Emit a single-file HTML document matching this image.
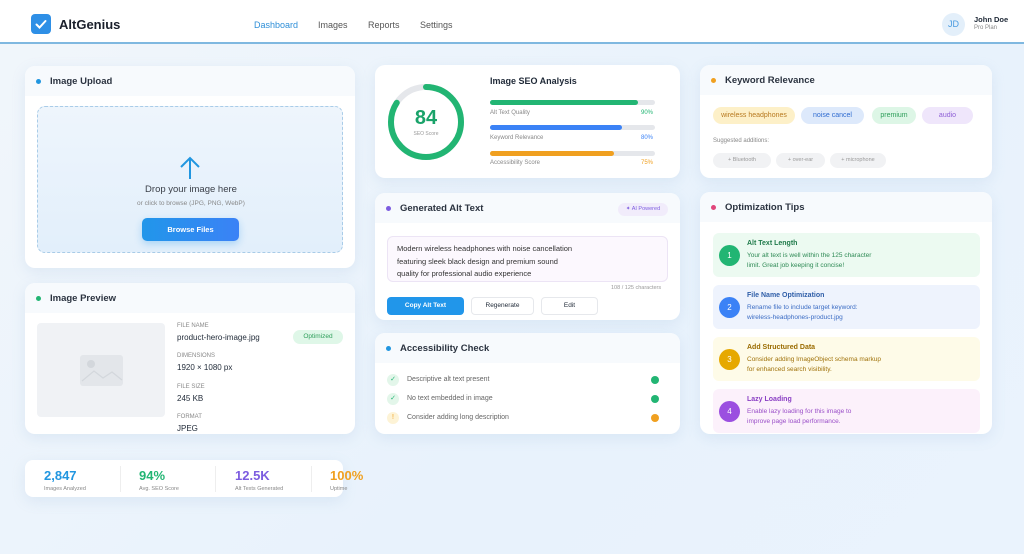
<!DOCTYPE html><html><head><meta charset="utf-8"><style>
*{box-sizing:border-box;margin:0;padding:0}
body{width:1024px;height:554px;overflow:hidden;font-family:"Liberation Sans",sans-serif;background:linear-gradient(135deg,#f1f6fb,#e8f2fc 60%,#eaf3fd);position:relative;color:#1f2937}
.a{position:absolute}
.hdr{left:0;top:0;width:1024px;height:44px;background:#fff;border-bottom:2px solid #7fb8e0}
.card{position:absolute;background:#fff;border-radius:10px;box-shadow:0 4px 14px rgba(120,160,200,.15);overflow:hidden}
.ch{height:30px;background:#f7fafd;font-size:9.5px;font-weight:bold;color:#2b3340;padding:10px 0 0 25px;position:relative}
.ch i{position:absolute;left:11px;top:13px;width:5px;height:5px;border-radius:50%}
.t{position:absolute;white-space:nowrap}
.bar{position:absolute;height:5px;border-radius:3px;background:#e5e7eb}
.bar b{display:block;height:5px;border-radius:3px}
.pill{position:absolute;height:17px;border-radius:9px;font-size:7px;text-align:center;line-height:17px}
.tip{position:absolute;left:13px;width:267px;height:44px;border-radius:6px}
.tip .n{position:absolute;left:6px;top:12px;width:21px;height:21px;border-radius:50%;color:#fff;font-size:8px;text-align:center;line-height:21px}
.tip .h{position:absolute;left:34px;top:7px;font-size:7px;font-weight:bold}
.tip .d{position:absolute;left:34px;top:18px;font-size:6.5px;line-height:10px}
</style></head><body>
<div class="a hdr">
<div class="a" style="left:31px;top:14px;width:20px;height:20px;border-radius:4px;background:#2e8fe6"><svg width="20" height="20"><path d="M5.5 10.5l3 3 6-6.5" stroke="#fff" stroke-width="2" fill="none" stroke-linecap="round"/></svg></div>
<div class="t" style="left:59px;top:17px;font-size:13px;font-weight:bold;color:#1a1f2b">AltGenius</div>
<div class="t" style="left:254px;top:20px;font-size:9px;color:#2f8fd8">Dashboard</div>
<div class="t" style="left:318px;top:20px;font-size:9px;color:#555">Images</div>
<div class="t" style="left:368px;top:20px;font-size:9px;color:#555">Reports</div>
<div class="t" style="left:420px;top:20px;font-size:9px;color:#555">Settings</div>
<div class="a" style="left:942px;top:13px;width:23px;height:23px;border-radius:50%;background:#e3effa;color:#4a9be0;font-size:9px;text-align:center;line-height:23px">JD</div>
<div class="t" style="left:974px;top:15px;font-size:7.5px;font-weight:bold">John Doe</div>
<div class="t" style="left:974px;top:25px;font-size:6px;color:#888">Pro Plan</div>
</div>

<div class="card" style="left:25px;top:66px;width:330px;height:202px">
<div class="ch"><i style="background:#2196e0"></i>Image Upload</div>
<div class="a" style="left:12px;top:40px;width:306px;height:147px;border:1px dashed #a9cce8;border-radius:8px;background:linear-gradient(180deg,#eef5fc,#e2effb)">
<svg class="a" style="left:140px;top:48px" width="24" height="26"><path d="M12 24V3M3 12l9-9 9 9" stroke="#2196e0" stroke-width="2" fill="none"/></svg>
<div class="t" style="left:0;width:306px;text-align:center;top:77px;font-size:9.5px;color:#3a3f48">Drop your image here</div>
<div class="t" style="left:0;width:306px;text-align:center;top:93px;font-size:6.5px;color:#888">or click to browse (JPG, PNG, WebP)</div>
<div class="a" style="left:104px;top:111px;width:97px;height:23px;border-radius:5px;background:linear-gradient(90deg,#2196ea,#3b82f6);color:#fff;font-size:7.5px;font-weight:bold;text-align:center;line-height:23px;box-shadow:0 3px 8px rgba(33,150,234,.3)">Browse Files</div>
</div></div>

<div class="card" style="left:25px;top:283px;width:330px;height:151px">
<div class="ch"><i style="background:#22b573"></i>Image Preview</div>
<div class="a" style="left:12px;top:40px;width:128px;height:94px;background:#f0f2f5;border-radius:4px">
<div class="a" style="left:43px;top:32px;width:43px;height:31px;background:#e3e6ea;border-radius:3px"></div>
<svg class="a" style="left:43px;top:28px" width="44" height="36"><circle cx="11" cy="13" r="4" fill="#d3d7dc"/><path d="M2 30l12-10 9 7 9-6 10 8" stroke="#d3d7dc" stroke-width="1.2" fill="none"/></svg></div>
<div class="t" style="left:152px;top:40px;font-size:6px;color:#888">FILE NAME</div>
<div class="t" style="left:152px;top:50px;font-size:8px">product-hero-image.jpg</div>
<div class="a" style="left:268px;top:47px;width:50px;height:14px;border-radius:7px;background:#dff7e8;color:#2e9e5a;font-size:6.5px;text-align:center;line-height:14px">Optimized</div>
<div class="t" style="left:152px;top:70px;font-size:6px;color:#888">DIMENSIONS</div>
<div class="t" style="left:152px;top:80px;font-size:8px">1920 × 1080 px</div>
<div class="t" style="left:152px;top:101px;font-size:6px;color:#888">FILE SIZE</div>
<div class="t" style="left:152px;top:111px;font-size:8px">245 KB</div>
<div class="t" style="left:152px;top:131px;font-size:6px;color:#888">FORMAT</div>
<div class="t" style="left:152px;top:141px;font-size:8px">JPEG</div>
</div>

<div class="card" style="left:25px;top:460px;width:318px;height:37px;border-radius:8px;overflow:visible">
<div class="t" style="left:19px;top:8px;font-size:13px;font-weight:bold;color:#2196e0">2,847</div>
<div class="t" style="left:19px;top:26px;font-size:5.5px;color:#888">Images Analyzed</div>
<div class="a" style="left:95px;top:6px;width:1px;height:26px;background:#eee"></div>
<div class="t" style="left:114px;top:8px;font-size:13px;font-weight:bold;color:#22b573">94%</div>
<div class="t" style="left:114px;top:26px;font-size:5.5px;color:#888">Avg. SEO Score</div>
<div class="a" style="left:190px;top:6px;width:1px;height:26px;background:#eee"></div>
<div class="t" style="left:210px;top:8px;font-size:13px;font-weight:bold;color:#7c5ce0">12.5K</div>
<div class="t" style="left:210px;top:26px;font-size:5.5px;color:#888">Alt Texts Generated</div>
<div class="a" style="left:286px;top:6px;width:1px;height:26px;background:#eee"></div>
<div class="t" style="left:305px;top:8px;font-size:13px;font-weight:bold;color:#f0a020">100%</div>
<div class="t" style="left:305px;top:26px;font-size:5.5px;color:#888">Uptime</div>
</div>

<div class="card" style="left:375px;top:65px;width:305px;height:113px">
<svg class="a" style="left:12px;top:18px" width="78" height="78"><circle cx="39" cy="39" r="35" stroke="#e5e7eb" stroke-width="6" fill="none"/><circle cx="39" cy="39" r="35" stroke="#22b573" stroke-width="6" fill="none" stroke-dasharray="185 220" transform="rotate(-90 39 39)" stroke-linecap="round"/></svg>
<div class="t" style="left:12px;width:78px;text-align:center;top:42px;font-size:20px;font-weight:bold;color:#1aa36a">84</div>
<div class="t" style="left:12px;width:78px;text-align:center;top:66px;font-size:5px;color:#999">SEO Score</div>
<div class="t" style="left:115px;top:11px;font-size:9px;font-weight:bold">Image SEO Analysis</div>
<div class="bar" style="left:115px;top:35px;width:165px"><b style="width:148px;background:#22b573"></b></div>
<div class="t" style="left:115px;top:45px;font-size:6px;color:#888">Alt Text Quality</div><div class="t" style="left:266px;top:45px;font-size:6px;color:#22b573">90%</div>
<div class="bar" style="left:115px;top:60px;width:165px"><b style="width:132px;background:#3b82f6"></b></div>
<div class="t" style="left:115px;top:70px;font-size:6px;color:#888">Keyword Relevance</div><div class="t" style="left:266px;top:70px;font-size:6px;color:#3b82f6">80%</div>
<div class="bar" style="left:115px;top:86px;width:165px"><b style="width:124px;background:#f0a020"></b></div>
<div class="t" style="left:115px;top:95px;font-size:6px;color:#888">Accessibility Score</div><div class="t" style="left:266px;top:95px;font-size:6px;color:#f0a020">75%</div>
</div>

<div class="card" style="left:375px;top:193px;width:305px;height:127px">
<div class="ch"><i style="background:#7c5ce0"></i>Generated Alt Text</div>
<div class="a" style="left:243px;top:10px;width:50px;height:13px;border-radius:7px;background:#f1ecfb;color:#7c5ce0;font-size:5.5px;text-align:center;line-height:13px">✦ AI Powered</div>
<div class="a" style="left:12px;top:43px;width:281px;height:46px;border:1px solid #ece4f5;border-radius:6px;background:#fcf8fe;padding:6px 9px;font-size:7.5px;line-height:12.5px;color:#333">Modern wireless headphones with noise cancellation<br>featuring sleek black design and premium sound<br>quality for professional audio experience</div>
<div class="t" style="left:236px;top:92px;font-size:5.5px;color:#999">108 / 125 characters</div>
<div class="a" style="left:12px;top:104px;width:77px;height:18px;border-radius:4px;background:#2196ea;color:#fff;font-size:6.5px;font-weight:bold;text-align:center;line-height:18px">Copy Alt Text</div>
<div class="a" style="left:96px;top:104px;width:63px;height:18px;border-radius:4px;border:1px solid #e6e8ec;font-size:6.5px;text-align:center;line-height:16px">Regenerate</div>
<div class="a" style="left:166px;top:104px;width:57px;height:18px;border-radius:4px;border:1px solid #e6e8ec;font-size:6.5px;text-align:center;line-height:16px">Edit</div>
</div>

<div class="card" style="left:375px;top:333px;width:305px;height:101px">
<div class="ch"><i style="background:#2196e0"></i>Accessibility Check</div>
<div class="a" style="left:12px;top:41px;width:12px;height:12px;border-radius:50%;background:#e3f6ea;color:#22b573;font-size:7px;text-align:center;line-height:12px">✓</div>
<div class="t" style="left:32px;top:43px;font-size:7px;color:#666">Descriptive alt text present</div>
<div class="a" style="left:276px;top:43px;width:8px;height:8px;border-radius:50%;background:#22b573"></div>
<div class="a" style="left:12px;top:60px;width:12px;height:12px;border-radius:50%;background:#e3f6ea;color:#22b573;font-size:7px;text-align:center;line-height:12px">✓</div>
<div class="t" style="left:32px;top:62px;font-size:7px;color:#666">No text embedded in image</div>
<div class="a" style="left:276px;top:62px;width:8px;height:8px;border-radius:50%;background:#22b573"></div>
<div class="a" style="left:12px;top:79px;width:12px;height:12px;border-radius:50%;background:#fdf3d6;color:#f0a020;font-size:7px;text-align:center;line-height:12px">!</div>
<div class="t" style="left:32px;top:81px;font-size:7px;color:#666">Consider adding long description</div>
<div class="a" style="left:276px;top:81px;width:8px;height:8px;border-radius:50%;background:#f0a020"></div>
</div>

<div class="card" style="left:700px;top:65px;width:292px;height:113px">
<div class="ch"><i style="background:#f0a020"></i>Keyword Relevance</div>
<div class="pill" style="left:13px;top:42px;width:82px;background:#fdf0c8;color:#b7791f">wireless headphones</div>
<div class="pill" style="left:101px;top:42px;width:63px;background:#dde9fb;color:#2f6bd0">noise cancel</div>
<div class="pill" style="left:172px;top:42px;width:44px;background:#ddf6e6;color:#2e9e5a">premium</div>
<div class="pill" style="left:222px;top:42px;width:51px;background:#efe6fb;color:#8e5fd6">audio</div>
<div class="t" style="left:13px;top:73px;font-size:6px;color:#888">Suggested additions:</div>
<div class="pill" style="left:13px;top:88px;width:58px;height:15px;line-height:15px;background:#f1f2f4;color:#999;font-size:5.5px">+ Bluetooth</div>
<div class="pill" style="left:76px;top:88px;width:49px;height:15px;line-height:15px;background:#f1f2f4;color:#999;font-size:5.5px">+ over-ear</div>
<div class="pill" style="left:130px;top:88px;width:56px;height:15px;line-height:15px;background:#f1f2f4;color:#999;font-size:5.5px">+ microphone</div>
</div>

<div class="card" style="left:700px;top:192px;width:292px;height:242px">
<div class="ch"><i style="background:#e0457b"></i>Optimization Tips</div>
<div class="tip" style="top:41px;background:#ecfaf1"><div class="n" style="background:#22b573">1</div><div class="h" style="color:#1f7a4a">Alt Text Length</div><div class="d" style="color:#2e8a55">Your alt text is well within the 125 character<br>limit. Great job keeping it concise!</div></div>
<div class="tip" style="top:93px;background:#eef3fd"><div class="n" style="background:#3b82f6">2</div><div class="h" style="color:#2f5ea8">File Name Optimization</div><div class="d" style="color:#3b6cc4">Rename file to include target keyword:<br>wireless-headphones-product.jpg</div></div>
<div class="tip" style="top:145px;background:#fefbe8"><div class="n" style="background:#e6a800">3</div><div class="h" style="color:#9a6b00">Add Structured Data</div><div class="d" style="color:#a0720a">Consider adding ImageObject schema markup<br>for enhanced search visibility.</div></div>
<div class="tip" style="top:197px;background:#fcf1fb"><div class="n" style="background:#9b4fe0">4</div><div class="h" style="color:#8a3fc4">Lazy Loading</div><div class="d" style="color:#9a4fc8">Enable lazy loading for this image to<br>improve page load performance.</div></div>
</div>
</body></html>
